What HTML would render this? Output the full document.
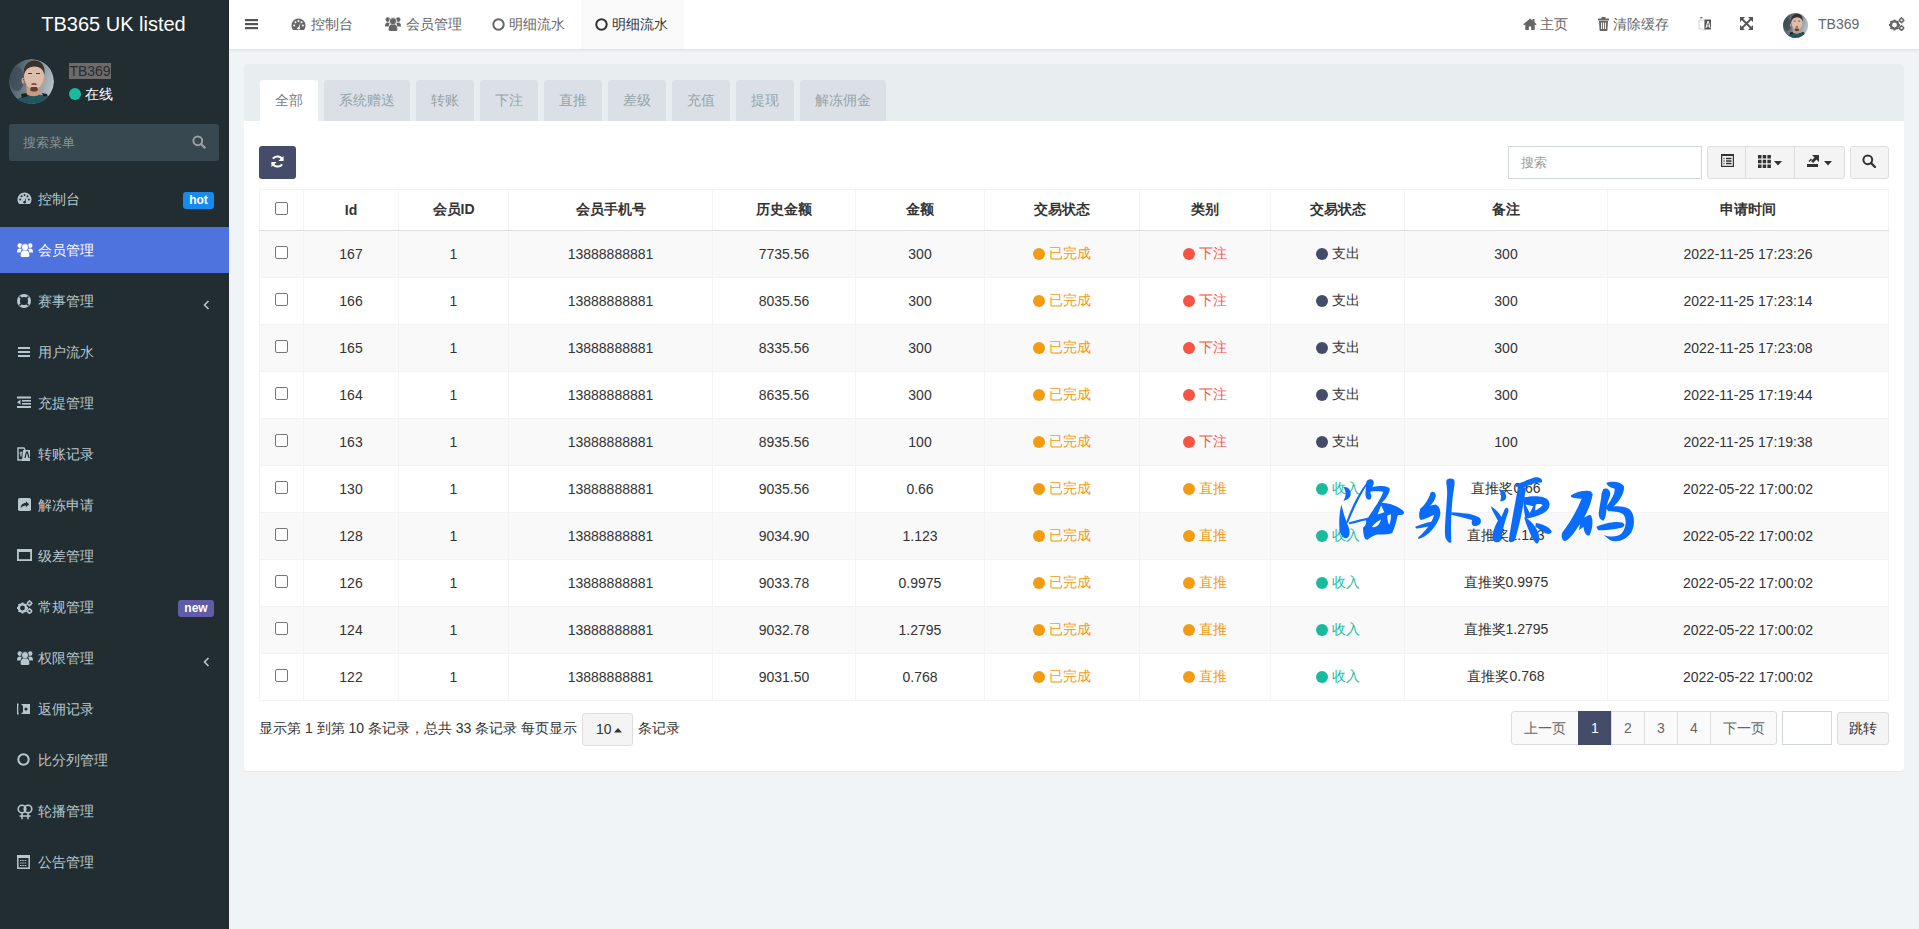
<!DOCTYPE html>
<html><head><meta charset="utf-8">
<style>
*{box-sizing:border-box;margin:0;padding:0}
html,body{width:1919px;height:929px;overflow:hidden}
body{font-family:"Liberation Sans",sans-serif;font-size:14px;color:#333;background:#f1f4f6;position:relative}
.abs{position:absolute}
svg{display:block}
/* sidebar */
#sb{position:absolute;left:0;top:0;width:229px;height:929px;background:#222d32}
#logo{position:absolute;left:-1px;top:0;width:229px;height:49px;color:#fff;font-size:20px;line-height:49px;text-align:center}
#sb .av{position:absolute;left:9px;top:59px;width:45px;height:45px;border-radius:50%;overflow:hidden}
#sb .nm{position:absolute;left:69px;top:63px;width:42px;height:16px;background:#6b6b6b;color:#2b2b2b;font-size:14px;line-height:16px;text-align:center}
#sb .on{position:absolute;left:69px;top:88px;width:12px;height:12px;border-radius:50%;background:#18bc9c}
#sb .ont{position:absolute;left:85px;top:85px;color:#fff;font-size:14px;line-height:18px}
#sb .srch{position:absolute;left:9px;top:124px;width:210px;height:37px;background:#374850;border-radius:3px}
#sb .srch span{position:absolute;left:14px;top:0;line-height:37px;color:#8a9297;font-size:13px}
#sb .srch svg{position:absolute;left:184px;top:12px}
.mi{position:absolute;left:0;width:229px;height:46px;color:#b8c7ce;font-size:14px}
.mi.act{background:#4e73df;color:#fff}
.mi .ic{position:absolute;left:17px;top:16px;width:15px;height:15px}
.mi .tx{position:absolute;left:38px;top:0;line-height:46px}
.mi .bd{position:absolute;left:183px;top:16px;width:31px;height:17px;border-radius:3px;color:#fff;font-weight:bold;font-size:12px;line-height:17px;text-align:center}
.mi .chev{position:absolute;left:203px;top:20px}
/* header */
#hd{position:absolute;left:229px;top:0;width:1690px;height:49px;background:#fff;box-shadow:0 1px 3px rgba(0,0,0,.1)}
.hn{position:absolute;top:0;height:49px;line-height:49px;color:#666;font-size:14px}
/* panel */
#pn{position:absolute;left:244px;top:64px;width:1660px;height:707px;background:#fff;border-radius:3px;box-shadow:0 1px 1px rgba(0,0,0,.05)}
#ph{position:absolute;left:0;top:0;width:1660px;height:57px;background:#e8edf0;border-radius:3px 3px 0 0}
.tb{position:absolute;top:16px;height:41px;background:#dae0e6;color:#95a5a6;font-size:14px;line-height:40px;text-align:center;border-radius:3px 3px 0 0}
.tb.act{background:#fff;color:#7b7b7b}
.hn svg{position:absolute}
.hn .t{position:absolute;top:0;white-space:nowrap}
#hd .hi{position:absolute}
#hd .ht{position:absolute;top:0;line-height:49px;color:#666;font-size:14px;white-space:nowrap}
#hd .hbg{position:absolute;top:0;height:49px;background:#fafafa}
#pb{position:absolute;left:0;top:0;width:1660px}
.btn{position:absolute;border-radius:3px}
#tbl{position:absolute;left:15px;top:125px;width:1629px;border-collapse:collapse;table-layout:fixed;font-size:14px;color:#333}
#tbl th{height:41px;font-weight:bold;text-align:center;border:1px solid #f3f3f3;border-bottom:1px solid #ddd;padding:0;vertical-align:middle}
#tbl td{height:47px;text-align:center;border:1px solid #f3f3f3;padding:0;vertical-align:middle;white-space:nowrap}
#tbl tr.odd td{background:#f9f9f9}
#tbl tr:last-child td{border-bottom:1px solid #f3f3f3}
.cb{display:block;margin:0 auto;position:relative;top:-2px;width:13px;height:13px;border:1px solid #767676;border-radius:2px;background:#fff}
.dot{display:inline-block;width:12px;height:12px;border-radius:50%;vertical-align:-2px;margin-right:4px}
.pg{position:absolute;top:647px;height:34px;border:1px solid #ddd;background:#fafafa;color:#666;font-size:14px;line-height:32px;text-align:center}

</style></head><body>
<div id="sb">
  <div id="logo">TB365 UK listed</div>
  <div class="av"><svg width="45" height="45" viewBox="0 0 45 45"><defs><clipPath id="cp45"><circle cx="22.5" cy="22.5" r="22.5"/></clipPath><linearGradient id="bg45" x1="0" y1="0.2" x2="1" y2="0.5"><stop offset="0" stop-color="#3b4a55"/><stop offset="0.5" stop-color="#75858e"/><stop offset="1" stop-color="#b4c0c5"/></linearGradient></defs><g clip-path="url(#cp45)"><rect width="45" height="45" fill="url(#bg45)"/><ellipse cx="8" cy="20" rx="7" ry="12" fill="#3a4853" opacity=".7"/><path d="M15 37c4-1 7-2 10-2s8 1 11 2l5 3 3 5H2l3-4z" fill="#21575c"/><path d="M12 35l5-1 2 3-6 2zM33 34l5 1 1 3-5-1z" fill="#1a2225"/><path d="M17 26h15l-1 9c-3 3-10 3-13 0z" fill="#c69a84"/><path d="M14.5 20c-1-1-1.5 2 0 4.5M35.5 20c1-1 1.5 2 0 4.5" stroke="#c99d88" stroke-width="2.2" fill="none"/><ellipse cx="25" cy="17.5" rx="10" ry="12.3" fill="#dcbcaa"/><path d="M21 31c2 2 6 2 8 0l-1-3h-6z" fill="#5a4036"/><path d="M14.8 16c-1-9 4-14.5 10.5-14.5S36.5 6 35.5 16c-1-5-3.5-8-10-8.5C19 8 16.2 11 14.8 16z" fill="#3a302c"/><path d="M19 14.5h4M27 14.5h4" stroke="#4a3a33" stroke-width="1.2"/><path d="M22.5 25.5c1.5-.8 3.5-.8 5 0" stroke="#8f4a44" stroke-width="1.6"/></g></svg></div>
  <div class="nm">TB369</div>
  <div class="on"></div><div class="ont">在线</div>
  <div class="srch"><span>搜索菜单</span><svg width="14" height="14" viewBox="0 0 14 14" style="position:absolute;left:183px;top:11px"><circle cx="5.8" cy="5.8" r="4.4" fill="none" stroke="#9a9fa3" stroke-width="2"/><path d="M9 9l3.6 3.6" stroke="#9a9fa3" stroke-width="2.2" stroke-linecap="round"/></svg></div>
<div class="mi" style="top:176px"><div class="ic"><svg width="15" height="13" viewBox="0 0 15 13"><path d="M7.5 0.5A7 7 0 0 0 0.5 7.5c0 1.6.5 3 1.4 4.2l.3.3h10.6l.3-.3A7 7 0 0 0 14.5 7.5 7 7 0 0 0 7.5.5z" fill="#b8c7ce"/><circle cx="3.2" cy="7.5" r="1" fill="#222d32"/><circle cx="4.5" cy="4.3" r="1" fill="#222d32"/><circle cx="7.5" cy="3" r="1" fill="#222d32"/><circle cx="11.8" cy="7.5" r="1" fill="#222d32"/><circle cx="10.5" cy="4.3" r="1" fill="#222d32"/><path d="M7 10.5L9.5 4.5 8.3 10.8z" fill="#222d32"/><circle cx="7.6" cy="10.3" r="1.3" fill="#222d32"/></svg></div><div class="tx">控制台</div><div class="bd" style="background:#178af0">hot</div></div>
<div class="mi act" style="top:227px"><div class="ic"><svg width="16" height="14" viewBox="0 0 16 14"><circle cx="2.8" cy="2.6" r="2.3" fill="#fff"/><circle cx="13.2" cy="2.6" r="2.3" fill="#fff"/><path d="M0 9.5C0 6.5.8 5.5 2.8 5.5c1 0 1.6.3 2.2.8C4.2 7 3.8 8.2 3.8 9.5z" fill="#fff"/><path d="M16 9.5c0-3-.8-4-2.8-4-1 0-1.6.3-2.2.8.8.7 1.2 1.9 1.2 3.2z" fill="#fff"/><path d="M3.5 12.6c0-3.4 1-5.4 3-5.4h3c2 0 3 2 3 5.4 0 .8-.5 1.4-1.3 1.4H4.8c-.8 0-1.3-.6-1.3-1.4z" fill="#4e73df"/><circle cx="8" cy="4.2" r="3.6" fill="#fff" stroke="#4e73df" stroke-width=".8"/><path d="M3.6 12.6c0-3.2 1-5.2 3-5.2h2.8c2 0 3 2 3 5.2 0 .8-.5 1.4-1.3 1.4H4.9c-.8 0-1.3-.6-1.3-1.4z" fill="#fff"/></svg></div><div class="tx">会员管理</div></div>
<div class="mi" style="top:278px"><div class="ic"><svg width="14" height="14" viewBox="0 0 14 14"><circle cx="7" cy="7" r="5.5" fill="none" stroke="#b8c7ce" stroke-width="3"/><path d="M2.5 2.5l3 3M11.5 2.5l-3 3M2.5 11.5l3-3M11.5 11.5l-3-3" stroke="#222d32" stroke-width="1.6"/></svg></div><div class="tx">赛事管理</div><div class="chev" style="top:22px"><svg width="7" height="10" viewBox="0 0 7 10"><path d="M5.5 1L1.5 5l4 4" stroke="#b8c7ce" stroke-width="1.6" fill="none"/></svg></div></div>
<div class="mi" style="top:329px"><div class="ic"><svg width="13" height="12" viewBox="0 0 13 12" style="margin:1px 0 0 1px"><rect x="0" y="1" width="12" height="2" fill="#b8c7ce"/><rect x="0" y="5" width="12" height="2" fill="#b8c7ce"/><rect x="0" y="9" width="12" height="2" fill="#b8c7ce"/></svg></div><div class="tx">用户流水</div></div>
<div class="mi" style="top:380px"><div class="ic"><svg width="14" height="12" viewBox="0 0 14 12"><rect x="0" y="0.5" width="14" height="2" fill="#b8c7ce"/><rect x="5" y="4" width="9" height="1.6" fill="#b8c7ce"/><rect x="5" y="7" width="9" height="1.6" fill="#b8c7ce"/><rect x="0" y="10" width="14" height="2" fill="#b8c7ce"/><path d="M0 6.3L3.5 3.8v5z" fill="#b8c7ce"/></svg></div><div class="tx">充提管理</div></div>
<div class="mi" style="top:431px"><div class="ic"><svg width="14" height="15" viewBox="0 0 14 15"><path d="M1 1h6l1 2v10H1z" fill="none" stroke="#b8c7ce" stroke-width="1.4"/><path d="M6 3h7v11H5z" fill="#b8c7ce"/><path d="M8 11l1.5-6h1L12 11" stroke="#222d32" stroke-width="1.2" fill="none"/><path d="M2.5 6h3M4 4.5v5" stroke="#b8c7ce" stroke-width="1.2"/></svg></div><div class="tx">转账记录</div></div>
<div class="mi" style="top:482px"><div class="ic"><svg width="13" height="13" viewBox="0 0 14 14" style="margin-left:1px"><rect x="0" y="0" width="14" height="14" rx="2" fill="#b8c7ce"/><path d="M3 11c0-4 2.5-5.5 5.5-5.5V3.5L12 6.8 8.5 10V8C6 8 4.5 9 3 11z" fill="#222d32"/></svg></div><div class="tx">解冻申请</div></div>
<div class="mi" style="top:533px"><div class="ic"><svg width="15" height="12" viewBox="0 0 15 12"><rect x="0.9" y="0.9" width="13.2" height="10.2" fill="none" stroke="#b8c7ce" stroke-width="1.8"/><rect x="0" y="0" width="15" height="3" fill="#b8c7ce"/></svg></div><div class="tx">级差管理</div></div>
<div class="mi" style="top:584px"><div class="ic"><svg width="16" height="14" viewBox="0 0 16 14"><circle cx="5.5" cy="8" r="3.6" fill="none" stroke="#b8c7ce" stroke-width="2.4"/><path d="M5.5 2.5v2M5.5 11.5v2M0 8h2M9 8h2M1.6 4.1l1.4 1.4M8 10.5l1.4 1.4M1.6 11.9l1.4-1.4M8 5.5l1.4-1.4" stroke="#b8c7ce" stroke-width="1.8"/><circle cx="12.5" cy="3.3" r="1.8" fill="none" stroke="#b8c7ce" stroke-width="1.5"/><circle cx="12.5" cy="11" r="1.8" fill="none" stroke="#b8c7ce" stroke-width="1.5"/><path d="M12.5 0v1M12.5 5.6v1M9.7 3.3h1M14.3 3.3h1.3M12.5 8v1M12.5 13v1M9.7 11h1M14.3 11h1.3" stroke="#b8c7ce" stroke-width="1.2"/></svg></div><div class="tx">常规管理</div><div class="bd" style="background:#605ca8;left:178px;width:36px;top:16px">new</div></div>
<div class="mi" style="top:635px"><div class="ic"><svg width="16" height="14" viewBox="0 0 16 14"><circle cx="2.8" cy="2.6" r="2.3" fill="#b8c7ce"/><circle cx="13.2" cy="2.6" r="2.3" fill="#b8c7ce"/><path d="M0 9.5C0 6.5.8 5.5 2.8 5.5c1 0 1.6.3 2.2.8C4.2 7 3.8 8.2 3.8 9.5z" fill="#b8c7ce"/><path d="M16 9.5c0-3-.8-4-2.8-4-1 0-1.6.3-2.2.8.8.7 1.2 1.9 1.2 3.2z" fill="#b8c7ce"/><path d="M3.5 12.6c0-3.4 1-5.4 3-5.4h3c2 0 3 2 3 5.4 0 .8-.5 1.4-1.3 1.4H4.8c-.8 0-1.3-.6-1.3-1.4z" fill="#222d32"/><circle cx="8" cy="4.2" r="3.6" fill="#b8c7ce" stroke="#222d32" stroke-width=".8"/><path d="M3.6 12.6c0-3.2 1-5.2 3-5.2h2.8c2 0 3 2 3 5.2 0 .8-.5 1.4-1.3 1.4H4.9c-.8 0-1.3-.6-1.3-1.4z" fill="#b8c7ce"/></svg></div><div class="tx">权限管理</div><div class="chev" style="top:22px"><svg width="7" height="10" viewBox="0 0 7 10"><path d="M5.5 1L1.5 5l4 4" stroke="#b8c7ce" stroke-width="1.6" fill="none"/></svg></div></div>
<div class="mi" style="top:686px"><div class="ic"><svg width="14" height="14" viewBox="0 0 14 14"><path d="M1 1.5C.3 3 .3 10 1 12.5" stroke="#b8c7ce" stroke-width="1.5" fill="none"/><path d="M4 2h9v10H4z" fill="#b8c7ce"/><path d="M4 2l2 2v6l-2 2" fill="#222d32"/><circle cx="9" cy="7" r="1.6" fill="#222d32"/></svg></div><div class="tx">返佣记录</div></div>
<div class="mi" style="top:737px"><div class="ic"><svg width="13" height="13" viewBox="0 0 13 13"><circle cx="6.5" cy="6.5" r="5.2" fill="none" stroke="#b8c7ce" stroke-width="2"/></svg></div><div class="tx">比分列管理</div></div>
<div class="mi" style="top:788px"><div class="ic"><svg width="16" height="16" viewBox="0 0 16 16"><circle cx="5" cy="5" r="3.8" fill="none" stroke="#b8c7ce" stroke-width="1.6"/><circle cx="11" cy="5" r="3.8" fill="none" stroke="#b8c7ce" stroke-width="1.6"/><path d="M5 8.8v6.5M11 8.8v6.5M2.5 12h11" stroke="#b8c7ce" stroke-width="1.5"/></svg></div><div class="tx">轮播管理</div></div>
<div class="mi" style="top:839px"><div class="ic"><svg width="13" height="14" viewBox="0 0 13 14"><rect x="0.8" y="0.8" width="11.4" height="12.4" fill="none" stroke="#b8c7ce" stroke-width="1.5"/><rect x="0" y="0" width="13" height="3" fill="#b8c7ce"/><path d="M3 5.5h7M3 8h7M3 10.5h7" stroke="#b8c7ce" stroke-width="1.2" stroke-dasharray="1.5 .8"/></svg></div><div class="tx">公告管理</div></div>
</div>
<div id="hd">
  <div class="hi" style="left:16px;top:19px"><svg width="13" height="11" viewBox="0 0 13 11"><rect y="0" width="13" height="2.2" fill="#555"/><rect y="4" width="13" height="2.2" fill="#555"/><rect y="8" width="13" height="2.2" fill="#555"/></svg></div>
  <div class="hi" style="left:62px;top:18px"><svg width="15" height="13" viewBox="0 0 15 13"><path d="M7.5 0.5A7 7 0 0 0 0.5 7.5c0 1.6.5 3 1.4 4.2l.3.3h10.6l.3-.3A7 7 0 0 0 14.5 7.5 7 7 0 0 0 7.5.5z" fill="#666"/><circle cx="3.2" cy="7.5" r="1" fill="#fff"/><circle cx="4.5" cy="4.3" r="1" fill="#fff"/><circle cx="7.5" cy="3" r="1" fill="#fff"/><circle cx="11.8" cy="7.5" r="1" fill="#fff"/><circle cx="10.5" cy="4.3" r="1" fill="#fff"/><path d="M7 10.5L9.5 4.5 8.3 10.8z" fill="#fff"/><circle cx="7.6" cy="10.3" r="1.3" fill="#fff"/></svg></div><span class="ht" style="left:82px">控制台</span>
  <div class="hi" style="left:156px;top:17px"><svg width="16" height="14" viewBox="0 0 16 14"><circle cx="2.8" cy="2.6" r="2.3" fill="#666"/><circle cx="13.2" cy="2.6" r="2.3" fill="#666"/><path d="M0 9.5C0 6.5.8 5.5 2.8 5.5c1 0 1.6.3 2.2.8C4.2 7 3.8 8.2 3.8 9.5z" fill="#666"/><path d="M16 9.5c0-3-.8-4-2.8-4-1 0-1.6.3-2.2.8.8.7 1.2 1.9 1.2 3.2z" fill="#666"/><path d="M3.5 12.6c0-3.4 1-5.4 3-5.4h3c2 0 3 2 3 5.4 0 .8-.5 1.4-1.3 1.4H4.8c-.8 0-1.3-.6-1.3-1.4z" fill="#fff"/><circle cx="8" cy="4.2" r="3.6" fill="#666" stroke="#fff" stroke-width=".8"/><path d="M3.6 12.6c0-3.2 1-5.2 3-5.2h2.8c2 0 3 2 3 5.2 0 .8-.5 1.4-1.3 1.4H4.9c-.8 0-1.3-.6-1.3-1.4z" fill="#666"/></svg></div><span class="ht" style="left:177px">会员管理</span>
  <div class="hi" style="left:263px;top:18px"><svg width="13" height="13" viewBox="0 0 13 13"><circle cx="6.5" cy="6.5" r="5.2" fill="none" stroke="#666" stroke-width="2"/></svg></div><span class="ht" style="left:280px">明细流水</span>
  <div class="hbg" style="left:352px;width:103px"></div>
  <div class="hi" style="left:366px;top:18px"><svg width="13" height="13" viewBox="0 0 13 13"><circle cx="6.5" cy="6.5" r="5.2" fill="none" stroke="#333" stroke-width="2"/></svg></div><span class="ht" style="left:383px;color:#333">明细流水</span>
  <div class="hi" style="left:1294px;top:18px"><svg width="14" height="12" viewBox="0 0 14 12"><path d="M7 0.5L0.3 6.3l.9 1L2.3 6.4V12h3.5V8.5h2.4V12h3.5V6.4l1.1.9.9-1L11.5 4.2V1h-2v1.5z" fill="#666"/></svg></div><span class="ht" style="left:1311px">主页</span>
  <div class="hi" style="left:1369px;top:17px"><svg width="11" height="14" viewBox="0 0 11 14"><rect x="0" y="1.5" width="11" height="2" fill="#666"/><rect x="3.5" y="0" width="4" height="2" fill="#666"/><path d="M1 4h9l-.6 9.5c0 .3-.3.5-.6.5H2.2c-.3 0-.6-.2-.6-.5z" fill="#666"/><path d="M3.6 5.5v6.5M5.5 5.5v6.5M7.4 5.5v6.5" stroke="#fff" stroke-width="1"/></svg></div><span class="ht" style="left:1384px">清除缓存</span>
  <div class="hi" style="left:1469px;top:17px"><svg width="14" height="14" viewBox="0 0 14 14"><path d="M1 3h6v9H1z" fill="none" stroke="#d4d4d4" stroke-width="1"/><path d="M2 0h3L3 2z" fill="#8a6a60"/><path d="M6.5 2.5h6.5v10H6.5z" fill="#555"/><path d="M8 11l1.7-6.5h.8L12 11M8.7 9h2.7" stroke="#fff" stroke-width="1" fill="none"/><path d="M4 14h4.5" stroke="#ddd" stroke-width="1"/></svg></div>
  <div class="hi" style="left:1511px;top:17px"><svg width="13" height="13" viewBox="0 0 13 13"><path d="M0 0h5L0 5zM13 0v5L8 0zM0 13V8l5 5zM13 13H8l5-5z" fill="#555"/><path d="M1.5 1.5l10 10M11.5 1.5l-10 10" stroke="#555" stroke-width="1.8"/></svg></div>
  <div class="hi" style="left:1554px;top:13px"><svg width="25" height="25" viewBox="0 0 45 45"><defs><clipPath id="cp25"><circle cx="22.5" cy="22.5" r="22.5"/></clipPath><linearGradient id="bg25" x1="0" y1="0.2" x2="1" y2="0.5"><stop offset="0" stop-color="#3b4a55"/><stop offset="0.5" stop-color="#75858e"/><stop offset="1" stop-color="#b4c0c5"/></linearGradient></defs><g clip-path="url(#cp25)"><rect width="45" height="45" fill="url(#bg25)"/><ellipse cx="8" cy="20" rx="7" ry="12" fill="#3a4853" opacity=".7"/><path d="M15 37c4-1 7-2 10-2s8 1 11 2l5 3 3 5H2l3-4z" fill="#21575c"/><path d="M12 35l5-1 2 3-6 2zM33 34l5 1 1 3-5-1z" fill="#1a2225"/><path d="M17 26h15l-1 9c-3 3-10 3-13 0z" fill="#c69a84"/><path d="M14.5 20c-1-1-1.5 2 0 4.5M35.5 20c1-1 1.5 2 0 4.5" stroke="#c99d88" stroke-width="2.2" fill="none"/><ellipse cx="25" cy="17.5" rx="10" ry="12.3" fill="#dcbcaa"/><path d="M21 31c2 2 6 2 8 0l-1-3h-6z" fill="#5a4036"/><path d="M14.8 16c-1-9 4-14.5 10.5-14.5S36.5 6 35.5 16c-1-5-3.5-8-10-8.5C19 8 16.2 11 14.8 16z" fill="#3a302c"/><path d="M19 14.5h4M27 14.5h4" stroke="#4a3a33" stroke-width="1.2"/><path d="M22.5 25.5c1.5-.8 3.5-.8 5 0" stroke="#8f4a44" stroke-width="1.6"/></g></svg></div><span class="ht" style="left:1589px">TB369</span>
  <div class="hi" style="left:1660px;top:17px"><svg width="16" height="14" viewBox="0 0 16 14"><circle cx="5.5" cy="8" r="3.6" fill="none" stroke="#666" stroke-width="2.4"/><path d="M5.5 2.5v2M5.5 11.5v2M0 8h2M9 8h2M1.6 4.1l1.4 1.4M8 10.5l1.4 1.4M1.6 11.9l1.4-1.4M8 5.5l1.4-1.4" stroke="#666" stroke-width="1.8"/><circle cx="12.5" cy="3.3" r="1.8" fill="none" stroke="#666" stroke-width="1.5"/><circle cx="12.5" cy="11" r="1.8" fill="none" stroke="#666" stroke-width="1.5"/><path d="M12.5 0v1M12.5 5.6v1M9.7 3.3h1M14.3 3.3h1.3M12.5 8v1M12.5 13v1M9.7 11h1M14.3 11h1.3" stroke="#666" stroke-width="1.2"/></svg></div>
</div>
<div id="pn">
  <div id="ph">
    <div class="tb act" style="left:16px;width:58px">全部</div>
    <div class="tb" style="left:80px;width:86px">系统赠送</div>
    <div class="tb" style="left:172px;width:58px">转账</div>
    <div class="tb" style="left:236px;width:58px">下注</div>
    <div class="tb" style="left:300px;width:58px">直推</div>
    <div class="tb" style="left:364px;width:58px">差级</div>
    <div class="tb" style="left:428px;width:58px">充值</div>
    <div class="tb" style="left:492px;width:58px">提现</div>
    <div class="tb" style="left:556px;width:86px">解冻佣金</div>
  </div>
<div id="pb"><div class="btn" style="left:15px;top:82px;width:37px;height:33px;background:#444c69"><svg width="13" height="13" viewBox="0 0 14 14" style="position:absolute;left:12px;top:9px"><path d="M12.5 5.5A6 6 0 0 0 2 4" stroke="#fff" stroke-width="2.2" fill="none"/><path d="M13.5 1v5.5H8z" fill="#fff"/><path d="M1.5 8.5A6 6 0 0 0 12 10" stroke="#fff" stroke-width="2.2" fill="none"/><path d="M.5 13V7.5H6z" fill="#fff"/></svg></div>
<div class="btn" style="left:1264px;top:82px;width:194px;height:33px;border:1px solid #d2d6de;border-radius:0;background:#fff"><span style="position:absolute;left:12px;top:0;line-height:31px;color:#999;font-size:13px">搜索</span></div>
<div class="btn" style="left:1463px;top:82px;width:138px;height:33px;border:1px solid #ddd;background:#f4f4f4"></div>
<div style="position:absolute;left:1501px;top:83px;width:1px;height:31px;background:#ddd"></div>
<div style="position:absolute;left:1550px;top:83px;width:1px;height:31px;background:#ddd"></div>
<svg width="13" height="13" viewBox="0 0 13 13" style="position:absolute;left:1477px;top:90px"><rect x=".6" y=".6" width="11.8" height="11.8" fill="none" stroke="#333" stroke-width="1.2"/><rect x="0" y="0" width="13" height="2" fill="#333"/><path d="M2.5 4.5h1M5 4.5h5.5M2.5 7h1M5 7h5.5M2.5 9.5h1M5 9.5h5.5" stroke="#333" stroke-width="1.3"/></svg>
<svg width="13" height="13" viewBox="0 0 13 13" style="position:absolute;left:1514px;top:91px"><path d="M0 0h3.5v3.5H0zM4.7 0h3.5v3.5H4.7zM9.4 0h3.5v3.5H9.4zM0 4.7h3.5v3.5H0zM4.7 4.7h3.5v3.5H4.7zM9.4 4.7h3.5v3.5H9.4zM0 9.4h3.5v3.5H0zM4.7 9.4h3.5v3.5H4.7zM9.4 9.4h3.5v3.5H9.4z" fill="#333"/></svg>
<svg width="8" height="5" viewBox="0 0 8 5" style="position:absolute;left:1530px;top:97px"><path d="M0 0h8L4 4.5z" fill="#333"/></svg>
<svg width="14" height="13" viewBox="0 0 14 13" style="position:absolute;left:1563px;top:90px"><path d="M0 10h11v3H0z" fill="#333"/><path d="M5 1h7v7l-2.5-2.5L6 9 4 7l3.5-3.5z" fill="#333"/><path d="M2 7.5l2.5-2.5" stroke="#333" stroke-width="1.5"/></svg>
<svg width="8" height="5" viewBox="0 0 8 5" style="position:absolute;left:1580px;top:97px"><path d="M0 0h8L4 4.5z" fill="#333"/></svg>
<div class="btn" style="left:1606px;top:82px;width:39px;height:33px;border:1px solid #ddd;background:#f4f4f4"><svg width="14" height="14" viewBox="0 0 14 14" style="position:absolute;left:11px;top:7px"><circle cx="5.8" cy="5.8" r="4.4" fill="none" stroke="#333" stroke-width="2"/><path d="M9 9l4 4" stroke="#333" stroke-width="2.4" stroke-linecap="round"/></svg></div>
<table id="tbl"><colgroup><col style="width:44px"><col style="width:95px"><col style="width:110px"><col style="width:204px"><col style="width:143px"><col style="width:129px"><col style="width:155px"><col style="width:131px"><col style="width:134px"><col style="width:203px"><col style="width:281px"></colgroup><thead><tr><th><span class="cb"></span></th><th>Id</th><th>会员ID</th><th>会员手机号</th><th>历史金额</th><th>金额</th><th>交易状态</th><th>类别</th><th>交易状态</th><th>备注</th><th>申请时间</th></tr></thead><tbody><tr class="odd"><td><span class="cb"></span></td><td>167</td><td>1</td><td>13888888881</td><td>7735.56</td><td>300</td><td><span class="dot" style="background:#f39c12"></span><span style="color:#f39c12">已完成</span></td><td><span class="dot" style="background:#f75444"></span><span style="color:#f75444">下注</span></td><td><span class="dot" style="background:#444c69"></span><span style="color:#333">支出</span></td><td>300</td><td>2022-11-25 17:23:26</td></tr><tr><td><span class="cb"></span></td><td>166</td><td>1</td><td>13888888881</td><td>8035.56</td><td>300</td><td><span class="dot" style="background:#f39c12"></span><span style="color:#f39c12">已完成</span></td><td><span class="dot" style="background:#f75444"></span><span style="color:#f75444">下注</span></td><td><span class="dot" style="background:#444c69"></span><span style="color:#333">支出</span></td><td>300</td><td>2022-11-25 17:23:14</td></tr><tr class="odd"><td><span class="cb"></span></td><td>165</td><td>1</td><td>13888888881</td><td>8335.56</td><td>300</td><td><span class="dot" style="background:#f39c12"></span><span style="color:#f39c12">已完成</span></td><td><span class="dot" style="background:#f75444"></span><span style="color:#f75444">下注</span></td><td><span class="dot" style="background:#444c69"></span><span style="color:#333">支出</span></td><td>300</td><td>2022-11-25 17:23:08</td></tr><tr><td><span class="cb"></span></td><td>164</td><td>1</td><td>13888888881</td><td>8635.56</td><td>300</td><td><span class="dot" style="background:#f39c12"></span><span style="color:#f39c12">已完成</span></td><td><span class="dot" style="background:#f75444"></span><span style="color:#f75444">下注</span></td><td><span class="dot" style="background:#444c69"></span><span style="color:#333">支出</span></td><td>300</td><td>2022-11-25 17:19:44</td></tr><tr class="odd"><td><span class="cb"></span></td><td>163</td><td>1</td><td>13888888881</td><td>8935.56</td><td>100</td><td><span class="dot" style="background:#f39c12"></span><span style="color:#f39c12">已完成</span></td><td><span class="dot" style="background:#f75444"></span><span style="color:#f75444">下注</span></td><td><span class="dot" style="background:#444c69"></span><span style="color:#333">支出</span></td><td>100</td><td>2022-11-25 17:19:38</td></tr><tr><td><span class="cb"></span></td><td>130</td><td>1</td><td>13888888881</td><td>9035.56</td><td>0.66</td><td><span class="dot" style="background:#f39c12"></span><span style="color:#f39c12">已完成</span></td><td><span class="dot" style="background:#f39c12"></span><span style="color:#f39c12">直推</span></td><td><span class="dot" style="background:#18bc9c"></span><span style="color:#18bc9c">收入</span></td><td>直推奖0.66</td><td>2022-05-22 17:00:02</td></tr><tr class="odd"><td><span class="cb"></span></td><td>128</td><td>1</td><td>13888888881</td><td>9034.90</td><td>1.123</td><td><span class="dot" style="background:#f39c12"></span><span style="color:#f39c12">已完成</span></td><td><span class="dot" style="background:#f39c12"></span><span style="color:#f39c12">直推</span></td><td><span class="dot" style="background:#18bc9c"></span><span style="color:#18bc9c">收入</span></td><td>直推奖1.123</td><td>2022-05-22 17:00:02</td></tr><tr><td><span class="cb"></span></td><td>126</td><td>1</td><td>13888888881</td><td>9033.78</td><td>0.9975</td><td><span class="dot" style="background:#f39c12"></span><span style="color:#f39c12">已完成</span></td><td><span class="dot" style="background:#f39c12"></span><span style="color:#f39c12">直推</span></td><td><span class="dot" style="background:#18bc9c"></span><span style="color:#18bc9c">收入</span></td><td>直推奖0.9975</td><td>2022-05-22 17:00:02</td></tr><tr class="odd"><td><span class="cb"></span></td><td>124</td><td>1</td><td>13888888881</td><td>9032.78</td><td>1.2795</td><td><span class="dot" style="background:#f39c12"></span><span style="color:#f39c12">已完成</span></td><td><span class="dot" style="background:#f39c12"></span><span style="color:#f39c12">直推</span></td><td><span class="dot" style="background:#18bc9c"></span><span style="color:#18bc9c">收入</span></td><td>直推奖1.2795</td><td>2022-05-22 17:00:02</td></tr><tr><td><span class="cb"></span></td><td>122</td><td>1</td><td>13888888881</td><td>9031.50</td><td>0.768</td><td><span class="dot" style="background:#f39c12"></span><span style="color:#f39c12">已完成</span></td><td><span class="dot" style="background:#f39c12"></span><span style="color:#f39c12">直推</span></td><td><span class="dot" style="background:#18bc9c"></span><span style="color:#18bc9c">收入</span></td><td>直推奖0.768</td><td>2022-05-22 17:00:02</td></tr></tbody></table>
<div style="position:absolute;left:15px;top:647px;line-height:34px;font-size:14px;color:#333;white-space:nowrap">显示第 1 到第 10 条记录，总共 33 条记录 每页显示</div>
<div class="btn" style="left:338px;top:649px;width:51px;height:33px;border:1px solid #ddd;background:#f4f4f4;color:#333;font-size:14px;line-height:31px"><span style="position:absolute;left:13px">10</span><svg width="8" height="5" viewBox="0 0 8 5" style="position:absolute;left:31px;top:14px"><path d="M0 4.5h8L4 0z" fill="#333"/></svg></div>
<div style="position:absolute;left:394px;top:647px;line-height:34px;font-size:14px;color:#333;white-space:nowrap">条记录</div>
<div class="pg" style="left:1267px;width:68px;border-radius:3px 0 0 3px">上一页</div>
<div class="pg" style="left:1334px;width:34px;background:#444c69;border-color:#444c69;color:#fff">1</div>
<div class="pg" style="left:1367px;width:34px">2</div>
<div class="pg" style="left:1400px;width:34px">3</div>
<div class="pg" style="left:1433px;width:34px">4</div>
<div class="pg" style="left:1466px;width:67px;border-radius:0 3px 3px 0">下一页</div>
<div class="btn" style="left:1538px;top:647px;width:50px;height:34px;border:1px solid #d2d6de;border-radius:0;background:#fff"></div>
<div class="btn" style="left:1593px;top:648px;width:52px;height:33px;border:1px solid #ddd;background:#f4f4f4;color:#333;font-size:14px;line-height:31px;text-align:center">跳转</div>
</div>
</div>
<svg width="1919" height="929" viewBox="0 0 1919 929" style="position:absolute;left:0;top:0;pointer-events:none">
<g fill="#0a6cfb">
<g transform="translate(1335,475) scale(0.07533)">
<path d="M110,160 C175,150 215,200 208,260 C200,310 160,335 110,345 C150,290 150,210 110,160Z"/>
<path d="M85,390 C60,480 50,620 60,720 C70,800 110,840 150,840 C190,830 200,780 190,720 L150,610 C120,540 100,450 85,390Z"/>
<path d="M150,620 C230,400 350,170 460,60 L466,70 C370,200 260,420 170,640Z"/>
<path d="M420,80 C460,40 520,50 515,110 C505,160 470,200 470,240 C490,280 490,320 455,328 C410,330 400,280 405,230 C410,170 410,120 420,80Z"/>
<path fill-rule="evenodd" d="M560,150 C640,140 710,150 725,180 C735,210 700,270 660,330 L620,370 C700,370 790,400 860,440 C920,470 930,510 900,525 C870,535 840,530 830,540 C815,620 790,700 760,770 C720,790 650,790 560,790 C520,800 470,830 430,860 C390,860 375,800 372,700 L400,670 C410,650 420,630 410,600 C330,620 260,640 190,655 L182,632 C280,600 380,580 440,565 C470,520 520,440 560,380 C590,330 620,280 640,225 C600,215 540,215 480,218 C450,210 445,190 470,170 C500,160 530,155 560,150Z M612,405 L565,525 L655,495Z M490,690 C520,650 560,615 610,590 C600,640 570,680 520,695Z M692,540 L742,522 C745,570 735,620 720,660 C705,640 695,590 692,540Z"/>
</g>
<g transform="translate(1410,470) scale(0.08613)">
<path d="M420,140 C420,100 470,90 510,110 C525,130 515,200 500,280 C480,450 470,650 480,830 C470,860 430,840 410,780 C395,700 420,500 430,300 C435,230 425,180 420,140Z"/>
<path d="M480,490 C600,500 720,500 800,550 C840,580 830,640 770,650 C720,660 710,620 720,580 C640,560 560,540 480,520Z"/>
<path d="M240,260 C270,240 300,260 300,300 C290,360 240,430 150,490 C120,470 110,460 120,450 C180,400 220,330 240,260Z"/>
<path d="M300,400 C360,430 370,520 320,600 C270,700 180,780 100,800 C90,790 90,780 110,770 C190,700 260,600 280,520 C230,540 180,570 130,580 C100,570 100,500 120,460 C180,430 240,410 300,400Z"/>
<path d="M60,660 C120,630 190,610 250,600 L240,650 C180,660 120,680 70,680Z"/>
</g>
<g transform="translate(1485,470) scale(0.08613)">
<path d="M160,220 C215,230 255,270 245,325 C235,355 205,365 175,362 C195,320 190,270 160,220Z"/>
<path d="M68,420 C120,450 165,500 190,545 C210,500 225,460 240,440 C265,430 280,455 270,485 C235,580 205,700 180,820 C150,850 95,840 85,805 C85,720 120,640 150,590 C120,530 85,480 68,420Z"/>
<path d="M350,170 C440,140 530,100 580,85 C640,80 675,110 660,145 C600,145 520,165 460,200 C400,215 360,205 350,170Z"/>
<path d="M385,185 L475,205 C450,400 410,600 350,810 C330,845 290,845 275,825 C300,640 345,420 385,185Z"/>
<path fill-rule="evenodd" d="M440,320 C540,300 680,290 735,350 C770,410 740,470 670,505 C600,540 530,555 470,565 L455,480 C450,420 445,370 440,320Z M470,400 L560,420 L520,500Z M590,400 C630,390 660,395 670,410 C640,440 610,460 580,470Z"/>
<path d="M455,545 C530,580 585,650 615,720 C635,780 640,830 605,855 C565,845 530,750 500,680 C480,630 465,590 455,545Z"/>
<path d="M590,615 C680,630 760,670 775,715 C770,745 735,750 700,735 C655,705 615,680 585,660Z"/>
</g>
<g transform="translate(1555,470) scale(0.08613)">
<path d="M190,290 C260,250 360,230 420,250 C440,280 420,320 380,330 C320,330 260,340 200,320 C180,310 180,300 190,290Z"/>
<path d="M340,255 L440,275 C410,430 340,570 260,670 C210,750 160,810 115,825 C75,815 70,755 85,725 C175,610 260,470 340,255Z"/>
<path d="M300,560 C340,560 400,510 410,520 C450,560 440,680 400,760 C370,770 340,740 330,660 L280,700Z"/>
<path d="M595,150 C650,125 770,135 800,190 C810,265 750,375 625,475 L585,440 C650,360 705,265 690,215 C660,205 615,195 595,150Z"/>
<path d="M560,220 C600,200 650,230 640,290 C620,360 600,400 600,450 C590,520 590,560 560,590 C520,580 500,540 510,480 C520,400 540,330 540,280Z"/>
<path d="M600,435 C700,415 810,415 870,460 C930,520 930,650 885,725 C825,815 720,845 640,815 L565,755 C650,785 730,775 775,735 C825,675 835,585 800,525 C770,490 700,480 620,480Z"/>
<path d="M480,660 C560,620 700,590 780,610 C820,630 810,660 770,670 C680,690 580,700 500,700Z"/>
</g>
</g>
</svg>

</body></html>
